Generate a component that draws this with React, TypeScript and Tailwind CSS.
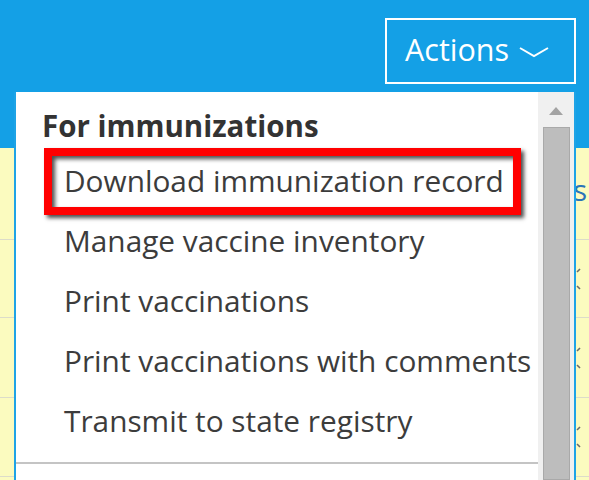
const items = [
  "Download immunization record",
  "Manage vaccine inventory",
  "Print vaccinations",
  "Print vaccinations with comments",
  "Transmit to state registry",
];

// heights of the table rows behind the menu
const rows = ["h-[92px]", "h-[78px]", "h-[80px]", "h-[79px]"];

function EdgeMarks() {
  return (
    <svg width="8" height="24" viewBox="0 0 8 24" className="text-[#6b6b6b]">
      <path d="M5 2 L2 5" stroke="currentColor" strokeWidth="1.6" fill="none" />
      <path d="M2 19 L5 22" stroke="currentColor" strokeWidth="1.6" fill="none" />
    </svg>
  );
}

export default function App() {
  return (
    <div
      className="relative w-[589px] h-[480px] overflow-hidden bg-[#fbfbbf]"
      style={{ fontFamily: '"Open Sans", "Noto Sans", sans-serif' }}
    >
      {/* Blue header with the Actions button */}
      <header className="h-[148px] bg-[#14a0e6] flex justify-end items-start pt-[18px] pr-[13px]">
        <button className="w-[191px] h-[66px] border-2 border-white flex items-center pl-[18px] gap-[10px] text-white text-[30.5px] leading-none">
          <span className="-mt-[4px]">Actions</span>
          <svg width="30" height="12" viewBox="0 0 30 12" className="mt-[2px]">
            <path d="M1 2 L15 10 L29 2" stroke="white" strokeWidth="2" fill="none" />
          </svg>
        </button>
      </header>

      {/* Table rows showing at the edges */}
      <div className="flex flex-col">
        {rows.map((h, i) => (
          <div key={i} className={`${h} border-b border-[#dcdcc9] flex justify-end items-center pr-[6px]`}>
            {i === 0 ? (
              <span className="text-[29px] leading-none text-[#2a74b8] -mr-[4px] -mt-[8px]">s</span>
            ) : (
              <EdgeMarks />
            )}
          </div>
        ))}
      </div>

      {/* Dropdown menu */}
      <div className="absolute left-[14px] top-[92px] w-[562px] bottom-0 bg-white border-x-2 border-[#1ea3e6] flex">
        <div className="relative flex-1 flex flex-col pt-[14px]">
          <div className="pl-[26px] text-[29.5px] leading-[40px] font-bold text-[#333333]">
            For immunizations
          </div>
          <ul className="mt-[5px] flex flex-col">
            {items.map((item) => (
              <li key={item} className="pl-[48px] text-[29.8px] leading-[60px] text-[#3c3c3c] whitespace-nowrap">
                {item}
              </li>
            ))}
          </ul>
          <div className="mt-[11px] h-[2px] bg-[#c4c4c4]"></div>

          {/* Highlight annotation */}
          <div className="absolute left-[28px] top-[56px] w-[477px] h-[67px] border-[8px] border-[#ff0000] shadow-[3px_3px_4px_rgba(0,0,0,0.7),inset_3px_3px_4px_rgba(0,0,0,0.7)] pointer-events-none"></div>
        </div>

        {/* Scrollbar */}
        <div className="w-[36px] bg-[#f0f0f0] flex flex-col items-center">
          <div className="h-[35px] flex items-center justify-center pt-[2px]">
            <svg width="14" height="8" viewBox="0 0 14 8">
              <path d="M7 0 L14 8 L0 8 Z" fill="#a3a3a3" />
            </svg>
          </div>
          <div className="flex-1 w-[27px] bg-[#bdbdbd] border border-[#a9a9a9]"></div>
        </div>
      </div>
    </div>
  );
}
